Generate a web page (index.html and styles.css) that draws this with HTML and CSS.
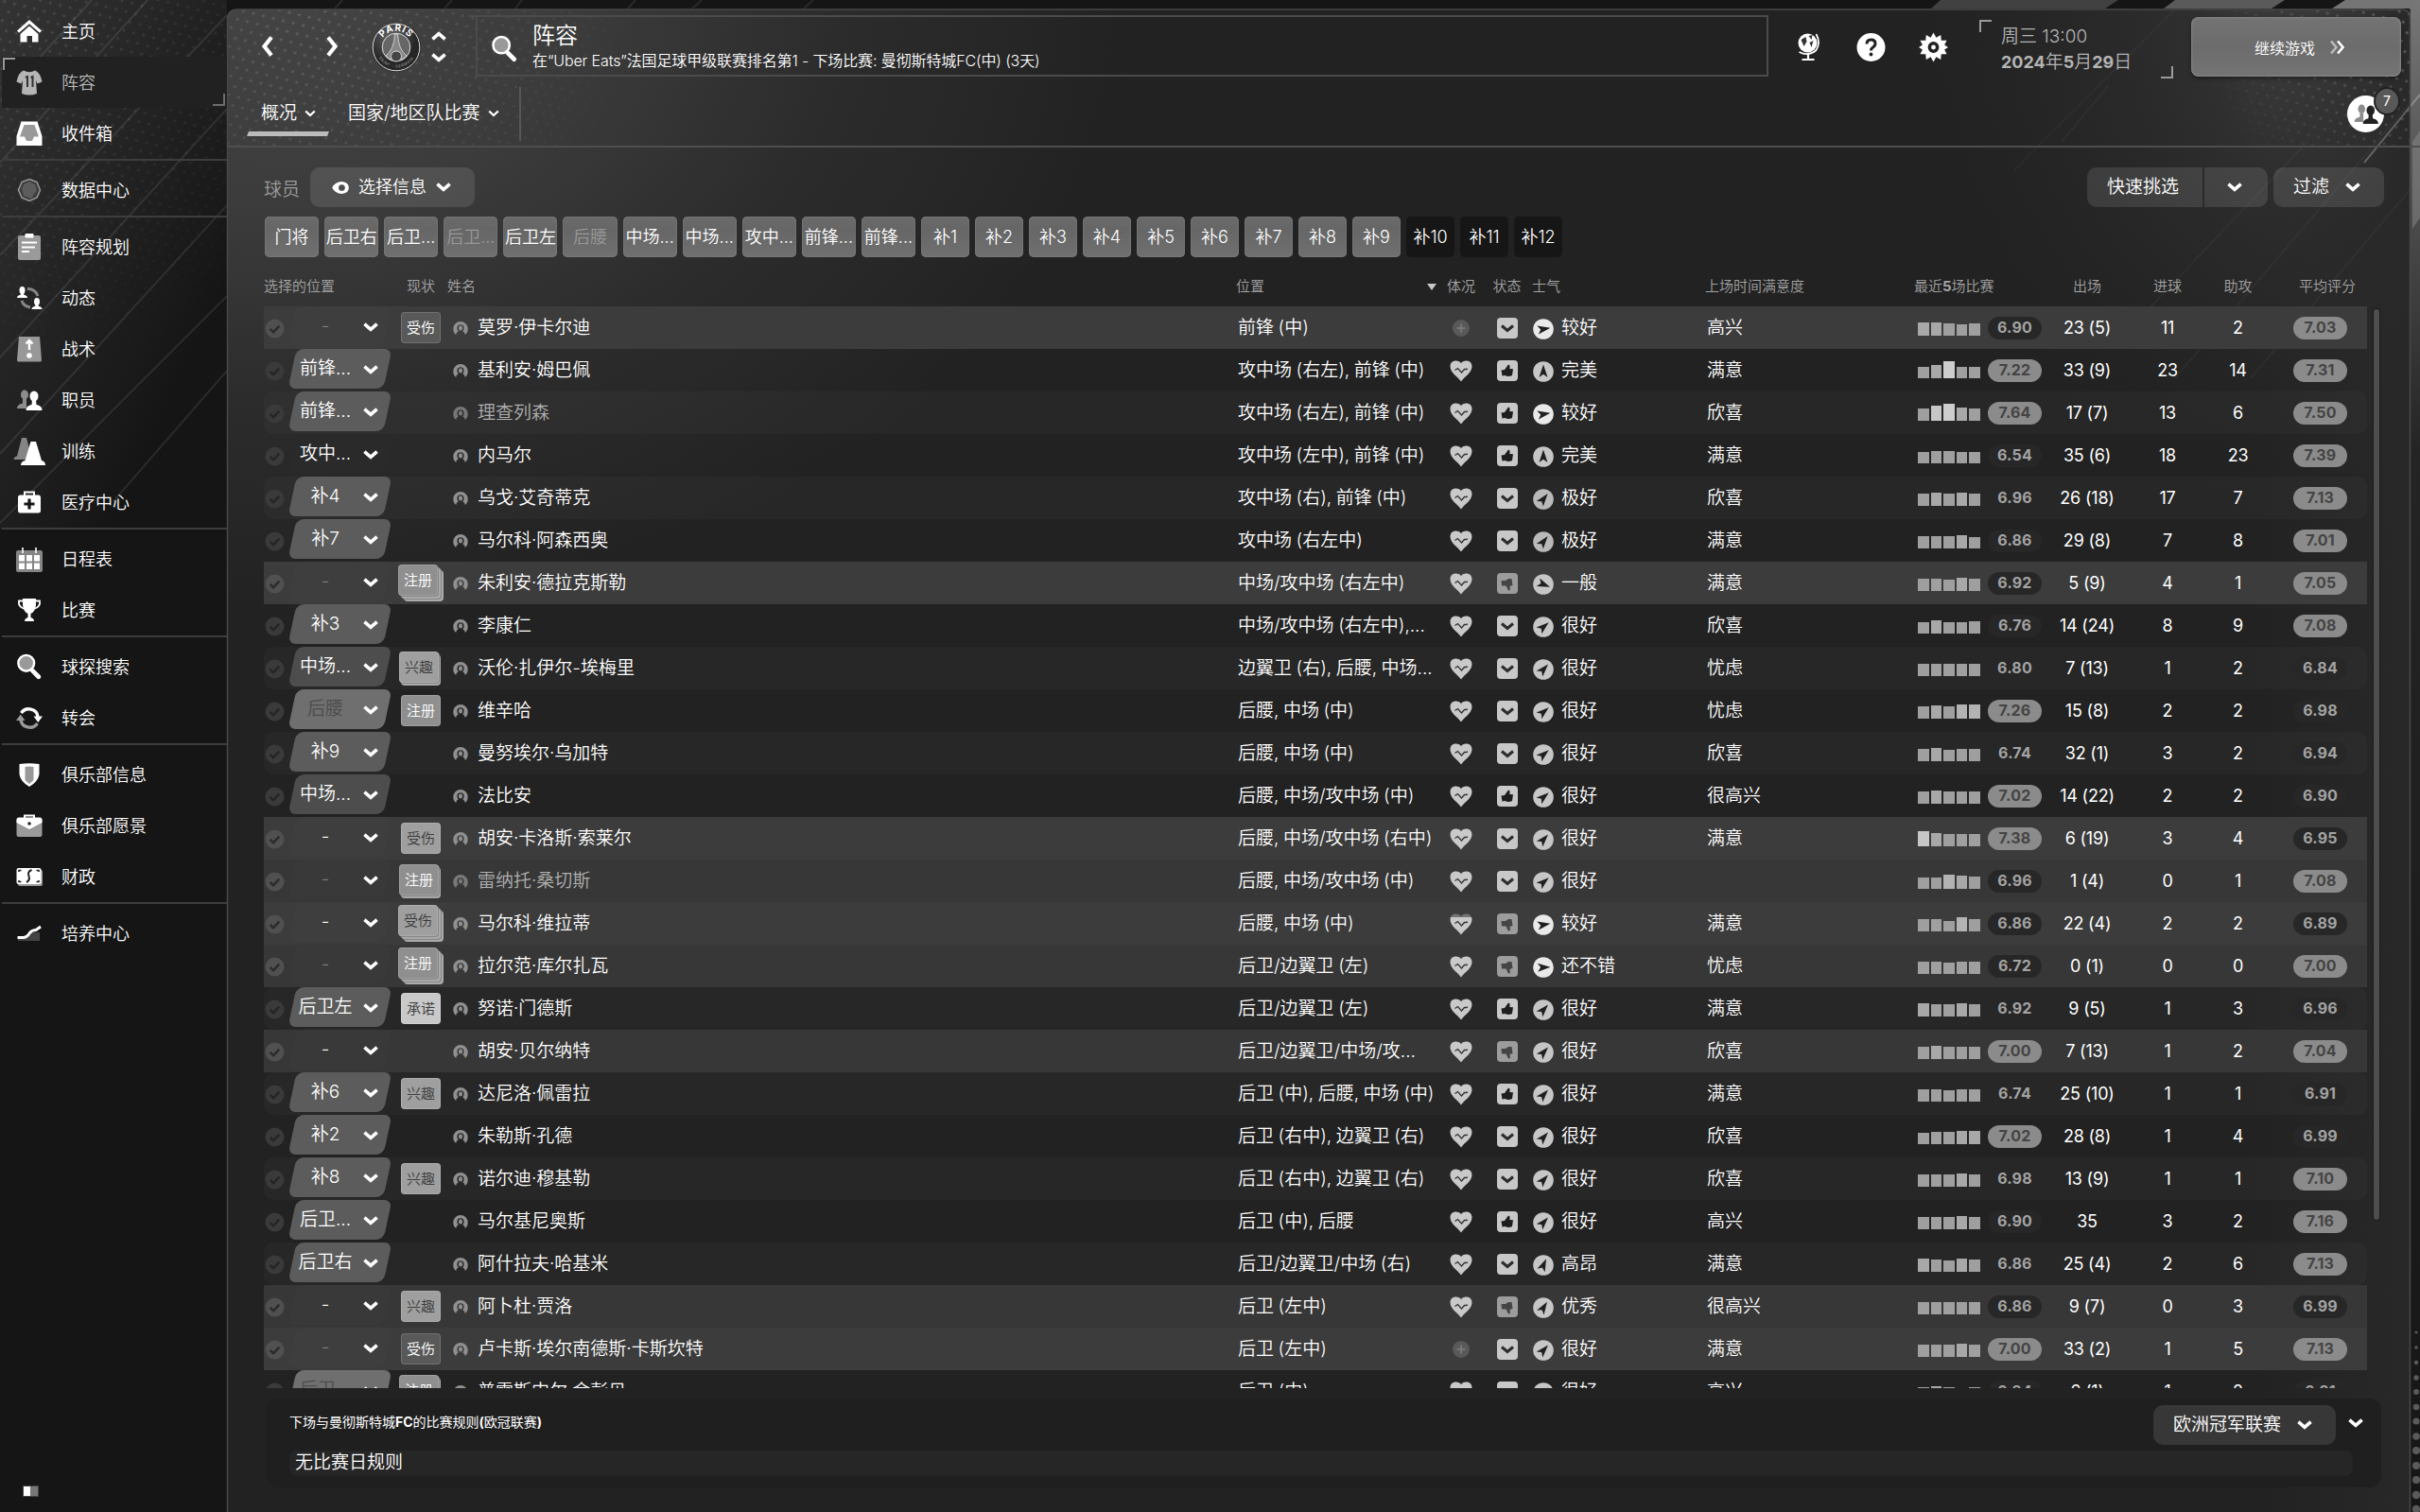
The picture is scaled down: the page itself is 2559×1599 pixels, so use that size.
FILE: index.html
```html
<!DOCTYPE html>
<html lang="zh-CN">
<head>
<meta charset="utf-8">
<title>阵容</title>
<link rel="stylesheet" href="styles.css">
</head>
<body>
<svg class="defs" width="0" height="0" aria-hidden="true">
  <symbol id="chev" viewBox="0 0 16 10"><path d="M1.400 1.600 L8 7.400 L14.600 1.600" fill="none" stroke="currentColor" stroke-width="3.500"/></symbol>
  <symbol id="chev-thin" viewBox="0 0 12 8"><path d="M1.200 1.500 L6 6 L10.800 1.500" fill="none" stroke="currentColor" stroke-width="2.300"/></symbol>
  <symbol id="lens" viewBox="0 0 28 30"><circle cx="10.5" cy="11" r="9" fill="#999" stroke="#fff" stroke-width="2.6"/><path d="M17.5 19.5 L24.5 26.5" stroke="#fff" stroke-width="5" stroke-linecap="round"/></symbol>
  <symbol id="check" viewBox="0 0 22 22"><circle cx="11" cy="11" r="10.5" fill="currentColor"/><path d="M6 11.5 L9.5 15 L16 8" fill="none" stroke="#1f1f1f" stroke-opacity=".75" stroke-width="2.6"/></symbol>
  <symbol id="person" viewBox="0 0 16 15"><path d="M3.200 14 Q.3 12 .3 7.800 A7.700 7.700 0 0 1 15.700 7.800 Q15.700 12 12.800 14 Q12.800 11.500 10.200 10.300 Q11.900 8.800 11.600 6.200 Q11.100 3.300 8 3.300 Q4.900 3.300 4.400 6.200 Q4.100 8.800 5.800 10.300 Q3.200 11.500 3.200 14Z" fill="#909090"/><ellipse cx="8" cy="6.900" rx="2.100" ry="2.600" fill="#909090"/></symbol>
  <symbol id="heart" viewBox="0 0 24 23"><path d="M12 22.500 C8 17 .5 13 .5 6.500 C.5 2.500 3.200 .5 6.500 .5 C9 .5 11.200 1.500 12 3.200 C12.800 1.500 15 .5 17.500 .5 C20.800 .5 23.500 2.500 23.500 6.500 C23.500 13 16 17 12 22.500Z" fill="#c9c9c9"/><path d="M5.500 10.500 L8.500 8.500 L12.500 13 L15.500 9.500 L17.500 9.500 L19 8.800" fill="none" stroke="#333" stroke-width="1.300"/></symbol>
  <symbol id="plus" viewBox="0 0 18 18"><circle cx="9" cy="9" r="9" fill="#595959"/><path d="M9 4.500V13.500M4.500 9H13.500" stroke="#777" stroke-width="2"/></symbol>
  <symbol id="st-c" viewBox="0 0 22 22"><rect width="22" height="22" rx="4" fill="currentColor"/><path d="M5 8.500 L11 13.500 L17 8.500" fill="none" stroke="#2c2c2c" stroke-width="3"/></symbol>
  <symbol id="st-u" viewBox="0 0 22 22"><rect width="22" height="22" rx="4" fill="currentColor"/><path d="M4.500 10.500 L8 10 L12 4.500 Q14.500 5 13.200 9 L17 9.300 L16 16 Q12 18 8.500 16 L5.500 16.500Z" fill="#1e1e1e"/></symbol>
  <symbol id="st-d" viewBox="0 0 22 22"><rect width="22" height="22" rx="4" fill="currentColor"/><path d="M4.500 8 L9 8 L12 6 L15.500 6 L16.500 13 L13.500 14 L14 18 L12 18.500 L9.500 13.500 L5 13.500Z" fill="#454545"/></symbol>
  <symbol id="arrow" viewBox="0 0 22 22"><circle cx="11" cy="11" r="10.800" fill="currentColor"/></symbol>
  <symbol id="people" viewBox="0 0 28 22"><ellipse cx="9" cy="5.500" rx="4" ry="5" fill="#8d8d8d"/><path d="M1 20 Q1 15.500 7 14.500 L7 10 H11 L11 20Z" fill="#8d8d8d"/><ellipse cx="19" cy="7" rx="4.500" ry="5.500" fill="currentColor"/><path d="M10.500 22 Q10.500 17 16.500 16 L17 11 H21 L21.500 16 Q27.500 17 27.500 22Z" fill="currentColor"/></symbol>
</svg>

<svg class="backdrop" viewBox="0 0 2559 1599" aria-hidden="true">
  <defs>
    <linearGradient id="sideGlow" x1="0" y1="0" x2="0.9" y2="1"><stop offset="0" stop-color="#343434"/><stop offset=".35" stop-color="#262626"/><stop offset=".8" stop-color="#151515"/></linearGradient>
    <radialGradient id="panelGlow" gradientUnits="userSpaceOnUse" cx="300" cy="0" r="900" gradientTransform="matrix(1 0 0 .72 0 0)"><stop offset="0" stop-color="#444"/><stop offset=".35" stop-color="#3b3b3b"/><stop offset=".65" stop-color="#2c2c2c"/><stop offset="1" stop-color="#222"/></radialGradient>
    <radialGradient id="panelGlowR" gradientUnits="userSpaceOnUse" cx="2560" cy="0" r="600"><stop offset="0" stop-color="#666"/><stop offset=".4" stop-color="#333"/><stop offset="1" stop-color="#222" stop-opacity="0"/></radialGradient>
    <linearGradient id="rightStrip" x1="0" y1="0" x2="0" y2="1"><stop offset="0" stop-color="#777"/><stop offset=".15" stop-color="#4a4a4a"/><stop offset=".3" stop-color="#242424"/><stop offset="1" stop-color="#161616"/></linearGradient>
    <linearGradient id="rightPanel" x1="0" y1="0" x2="1" y2="0"><stop offset="0" stop-color="#282828" stop-opacity="0"/><stop offset="1" stop-color="#282828"/></linearGradient>
    <pattern id="dots" width="18" height="12" patternUnits="userSpaceOnUse" patternTransform="rotate(-20)"><circle cx="4" cy="3" r="1.600" fill="#fff"/><circle cx="13" cy="9" r="1.600" fill="#fff"/></pattern>
    <radialGradient id="fadeL" gradientUnits="userSpaceOnUse" cx="330" cy="10" r="360"><stop offset="0" stop-color="#fff"/><stop offset="1" stop-color="#000"/></radialGradient>
    <radialGradient id="fadeR" gradientUnits="userSpaceOnUse" cx="2559" cy="30" r="230"><stop offset="0" stop-color="#fff"/><stop offset="1" stop-color="#000"/></radialGradient>
    <radialGradient id="fadeS" gradientUnits="userSpaceOnUse" cx="0" cy="0" r="420"><stop offset="0" stop-color="#fff"/><stop offset="1" stop-color="#000"/></radialGradient>
    <mask id="mL"><rect x="241" y="10" width="500" height="144" fill="url(#fadeL)"/></mask>
    <mask id="mR"><rect x="2300" y="10" width="249" height="144" fill="url(#fadeR)"/></mask>
    <mask id="mS"><rect width="240" height="560" fill="url(#fadeS)"/></mask>
  </defs>
  <rect width="2559" height="1599" fill="#151515"/>
  <rect width="240" height="560" fill="url(#sideGlow)"/>
  <rect width="240" height="560" fill="url(#dots)" opacity=".13" mask="url(#mS)"/>
  <g stroke="#fff" stroke-opacity=".09" stroke-width="2">
    <path d="M97 0L0 107M156 0L0 172M240 16L0 270M240 115L0 378M240 217L0 480M240 313L0 553M240 392L120 530M362 0L354 9M478 0L470 9M552 0L545 9M672 0L664 9M742 0L732 9M860 0L850 9"/>
  </g>
  <path d="M2052 0H2240L2226 9H2042Z" fill="#414141"/>
  <path d="M2300 0H2416L2402 9H2288Z" fill="#5a5a5a"/>
  <path d="M2480 0H2559V9H2466Z" fill="#757575"/>
  <rect x="2548" width="11" height="1599" fill="url(#rightStrip)"/>
  <path d="M2551 150L2559 138V230L2551 242Z" fill="#8a8a8a" opacity=".5"/>
  <g fill="#5a5a5a"><circle cx="2555" cy="1409" r="1.500"/><circle cx="2555" cy="1425" r="1.800"/><circle cx="2555" cy="1441" r="2.200"/><circle cx="2555" cy="1457" r="2.700"/><circle cx="2555" cy="1472" r="3"/><circle cx="2555" cy="1488" r="3.300"/><circle cx="2555" cy="1503" r="3.600"/><circle cx="2555" cy="1519" r="3.800"/><circle cx="2555" cy="1534" r="4"/><circle cx="2555" cy="1550" r="4"/><circle cx="2555" cy="1565" r="4"/><circle cx="2555" cy="1581" r="4.200"/><circle cx="2555" cy="1596" r="4.200"/></g>
  <path d="M240 1599V21Q240 10 251 10H2539Q2549 10 2549 20V1599Z" fill="#222"/>
  <path d="M240 1599V21Q240 10 251 10H2539Q2549 10 2549 20V1599Z" fill="url(#panelGlow)"/>
  <path d="M1900 10H2539Q2549 10 2549 20V700H1900Z" fill="url(#panelGlowR)" opacity=".75"/>
  <rect x="2380" y="10" width="169" height="1589" fill="url(#rightPanel)"/>
  <rect x="241" y="10" width="500" height="144" fill="url(#dots)" opacity=".16" mask="url(#mL)"/>
  <rect x="2300" y="10" width="249" height="144" fill="url(#dots)" opacity=".26" mask="url(#mR)"/>
  <path d="M2549 108L2300 400M2300 10L2130 180M2230 90L2180 150M2440 150L2250 350M2549 200L2380 400" stroke="#fff" stroke-opacity=".035" stroke-width="2"/>
  <path d="M2559 100L2500 172" stroke="#fff" stroke-opacity=".25" stroke-width="2"/>
  <path d="M240.500 1599V21Q240.500 10 251 10H2539Q2548.500 10 2548.500 20V1599" fill="none" stroke="#484848" stroke-width="1.500"/>
</svg>

<div class="app">
<nav class="side">
  <a class="item"><svg viewBox="0 0 28 28"><path d="M1 13.500L14 2L27 13.500L25 15.800L14 6.200L3 15.800Z" fill="#fff"/><path d="M4.500 17L14 8.500L23.500 17V25.500H17V19H11.500V25.500H4.500Z" fill="#fff"/></svg>主页</a>
  <a class="item active"><svg viewBox="0 0 28 28"><path d="M8 1.500Q14 5 20 1.500Q25.500 3.500 27.500 13.500L22.500 15.500L21 12L22 26Q14 29 6 26L7 12L5.500 15.500L.5 13.500Q2.500 3.500 8 1.500Z" fill="#b5b5b5"/><path d="M10 9L12 8V19M15.500 9L17.500 8V19" fill="none" stroke="#333" stroke-width="2"/></svg>阵容<i class="corner tl"></i><i class="corner br"></i></a>
  <a class="item"><svg viewBox="0 0 28 28"><path d="M5.500 1.500H22.500L27.500 17V27H.5V17Z" fill="#fff"/><path d="M8.500 5H19.500L24 17.500H19L17 22H11L9 17.500H4Z" fill="#999"/></svg>收件箱</a>
  <hr>
  <a class="item"><svg viewBox="0 0 28 28"><path d="M14 2.500L22 5.500L25.500 14L22 22L14 25.500L6 22L2.500 14L6 5.500Z" fill="#3c3c3c" stroke="#999" stroke-width="1.500"/><path d="M14 5L20 8L22 14L16 23L8 20L6 13L8 8Z" fill="#5c5c5c"/></svg>数据中心</a>
  <hr>
  <a class="item"><svg viewBox="0 0 28 28"><rect x="2" y="2" width="24" height="26" rx="2" fill="#9a9a9a"/><rect x="9.500" y="0" width="9" height="4.500" rx="1" fill="#fff"/><path d="M6 9.500H22M6 14.500H20M6 19H14" stroke="#fff" stroke-width="1.800"/></svg>阵容规划</a>
  <a class="item"><svg viewBox="0 0 28 28"><g fill="#fff"><ellipse cx="6.500" cy="6" rx="3" ry="4"/><path d="M1 14Q1 11.500 4.800 10.800V8H8.200V10.800Q12 11.500 12 14Z"/><ellipse cx="22" cy="18" rx="3" ry="4"/><path d="M16.500 26Q16.500 23.500 20.300 22.800V20H23.700V22.800Q27.500 23.500 27.500 26Z"/></g><path d="M12 4.500Q20 4 23 12M15 24Q8 23 6 17" fill="none" stroke="#858585" stroke-width="3"/></svg>动态</a>
  <a class="item"><svg viewBox="0 0 28 28"><path d="M3 1H25L27 26Q27 27.500 25 27.500H3Q1 27.500 1 26Z" fill="#989898"/><path d="M14 5V15M10.500 8.500L14 5L17.500 8.500" fill="none" stroke="#fff" stroke-width="2.400"/><circle cx="14" cy="21" r="2.800" fill="#fff"/></svg>战术</a>
  <a class="item"><svg viewBox="0 0 28 28"><use href="#people" y="3" width="28" height="22"/></svg>职员</a>
  <a class="item"><svg viewBox="0 0 28 28"><path d="M6 0H11L17 23H-2.500Q-2 19.500 1 19.500Z" fill="#858585"/><path d="M15.500 4H21L27 24Q31 25 31 29H5Q5 25 9.500 24Z" fill="#fff"/></svg>训练</a>
  <a class="item"><svg viewBox="0 0 28 28"><path d="M9 7V3.500H19V7" fill="none" stroke="#fff" stroke-width="2"/><rect x="2" y="6.500" width="24" height="19" rx="2.500" fill="#fff"/><path d="M14 10.500V21.500M8.500 16H19.500" stroke="#151515" stroke-width="3.200"/></svg>医疗中心</a>
  <hr>
  <a class="item"><svg viewBox="0 0 28 28"><rect x="0" y="5" width="28" height="23" rx="2" fill="#858585"/><path d="M7 2V8M21 2V8" stroke="#fff" stroke-width="1.600"/><path d="M3 10H9V16.500H3ZM11 10H17V16.500H11ZM19 10H25V16.500H19ZM3 18.500H9V25H3ZM11 18.500H17V25H11ZM19 18.500H25V25H19Z" fill="#fff"/></svg>日程表</a>
  <a class="item"><svg viewBox="0 0 28 28"><path d="M7 2H21V9Q20 16 15.500 18V22Q19 23 19 26H9Q9 23 12.500 22V18Q8 16 7 9Z" fill="#fff"/><path d="M7 4.500H3Q2 11 9 13M21 4.500H25Q26 11 19 13" fill="none" stroke="#fff" stroke-width="1.800"/></svg>比赛</a>
  <hr>
  <a class="item"><svg viewBox="0 0 28 30"><use href="#lens" width="28" height="30"/></svg>球探搜索</a>
  <a class="item"><svg viewBox="0 0 28 28"><path d="M5.500 9A9.500 9 0 0 1 23 13" fill="none" stroke="#fff" stroke-width="3.400"/><path d="M18.500 12.500H28L23.300 19Z" fill="#fff"/><path d="M22.500 20A9.500 9 0 0 1 5 16" fill="none" stroke="#999" stroke-width="3.400"/><path d="M0 17H9.500L4.700 10.500Z" fill="#999"/></svg>转会</a>
  <hr>
  <a class="item"><svg viewBox="0 0 28 28"><path d="M3.500 3Q14 1.500 24.500 3V14Q23 22 14 27Q5 22 3.500 14Z" fill="#fff"/><path d="M9.500 6Q14 5 18.500 6V20L14 24L9.500 20Z" fill="#999"/></svg>俱乐部信息</a>
  <a class="item"><svg viewBox="0 0 28 28"><path d="M9 6V3.500H19V6" fill="none" stroke="#fff" stroke-width="2"/><rect x=".5" y="6" width="27" height="20" rx="2.500" fill="#999"/><path d="M.5 8Q.5 5.500 3 5.500H25Q27.500 5.500 27.500 8V11L14 18L.5 11Z" fill="#fff"/><circle cx="14" cy="12" r="1.800" fill="#222"/></svg>俱乐部愿景</a>
  <a class="item"><svg viewBox="0 0 28 28"><rect x="2" y="7" width="26" height="17" rx="2" fill="#999"/><rect x=".5" y="5" width="26" height="17" rx="2" fill="#fff"/><path d="M3 9V7.500H5.500M21.500 7.500H24V9M3 18V19.500H5.500M21.500 19.500H24V18" stroke="#222" fill="none" stroke-width="1.600"/><path d="M16.500 7Q11.500 9 13.500 13.500Q15 18 11 20" stroke="#222" fill="none" stroke-width="2"/></svg>财政</a>
  <hr>
  <a class="item"><svg viewBox="0 0 28 28"><path d="M2 19.500H9Q14 19 16.500 13H25V22H2Z" fill="#444"/><path d="M1.500 18.500H8Q12 18 14.500 13.500Q17 10.500 21 10.500L26 7" fill="none" stroke="#fff" stroke-width="3"/></svg>培养中心</a>
  <i class="battery"></i>
</nav>

<main class="main">
  <header class="top">
    <div class="nav-arrows">
      <svg viewBox="0 0 14 22"><path d="M11 1.500L3.500 11L11 20.500" fill="none" stroke="#fff" stroke-width="4.200"/></svg>
      <svg viewBox="0 0 14 22"><path d="M3 1.500L10.500 11L3 20.500" fill="none" stroke="#fff" stroke-width="4.200"/></svg>
    </div>
    <svg class="crest" viewBox="0 0 54 54">
      <defs><path id="arcTop" d="M9.800 27A17.200 17.200 0 0 1 44.200 27"/><path id="arcBot" d="M5.500 27A21.500 21.500 0 0 0 48.500 27"/><radialGradient id="cg" cx=".4" cy=".3"><stop offset="0" stop-color="#666"/><stop offset="1" stop-color="#262626"/></radialGradient></defs>
      <circle cx="27" cy="27" r="26" fill="url(#cg)"/><circle cx="27" cy="27" r="24.800" fill="none" stroke="#ddd" stroke-width="1"/><circle cx="27" cy="27" r="14.800" fill="#666" stroke="#ddd" stroke-width="1"/>
      <path d="M25.500 13H28.500Q29.500 30 38 36L33 40Q27 32 21 40L16 36Q24.500 30 25.500 13Z" fill="#888" stroke="#ddd" stroke-width=".8"/><circle cx="27" cy="36.500" r="5.500" fill="#444" stroke="#ddd" stroke-width=".9"/>
      <text class="crest-name"><textPath href="#arcTop" startOffset="50%" text-anchor="middle">PARIS</textPath></text>
      <text class="crest-sub"><textPath href="#arcBot" startOffset="50%" text-anchor="middle">SAINT - GERMAIN</textPath></text>
    </svg>
    <div class="updown"><svg class="flip"><use href="#chev"/></svg><svg><use href="#chev"/></svg></div>
    <div class="search">
      <svg class="lens"><use href="#lens"/></svg>
      <div><h1>阵容</h1><p>在“Uber Eats”法国足球甲级联赛排名第1 - 下场比赛: 曼彻斯特城FC(中) (3天)</p></div>
    </div>
    <div class="tools">
      <svg viewBox="0 0 30 32"><circle cx="14" cy="11.500" r="10" fill="#fff"/><path d="M7 8L12 5L13 10L10 15ZM15 4L19 3L18 8ZM16 11L20 9L18 16Z" fill="#333"/><path d="M23 2Q28 11 23 19Q15 26 5 21" fill="none" stroke="#fff" stroke-width="1.800"/><path d="M14.500 23V28M8 29H21" stroke="#fff" stroke-width="2.200"/></svg>
      <svg viewBox="0 0 30 32"><circle cx="15" cy="16" r="15" fill="#fff"/><path d="M10.500 12.500Q10.500 8 15 8Q19.500 8 19.500 12Q19.500 14.500 17 16Q15 17.200 15 19.500" fill="none" stroke="#222" stroke-width="3"/><circle cx="15" cy="23.500" r="1.900" fill="#222"/></svg>
      <svg viewBox="0 0 32 32"><path d="M16 0L19 5.500L24 2.500L24.500 8.500L30.500 8.500L28 13.500L32 16L28 18.500L30.500 23.500L24.500 23.500L24 29.500L19 26.500L16 32L13 26.500L8 29.500L7.500 23.500L1.500 23.500L4 18.500L0 16L4 13.500L1.500 8.500L7.500 8.500L8 2.500L13 5.500Z" fill="#fff"/><circle cx="16" cy="16" r="4.300" fill="#fff" stroke="#222" stroke-width="3.600"/></svg>
    </div>
    <div class="date"><i class="corner tl"></i><span>周三 13:00</span><span class="day"><b>2024</b>年<b>5</b>月<b>29</b>日</span><i class="corner br"></i></div>
    <button class="continue">继续游戏<svg viewBox="0 0 18 16"><path d="M2 1.500L7.500 8L2 14.500" fill="none" stroke="#bbb" stroke-width="2.600"/><path d="M9 1.500L14.500 8L9 14.500" fill="none" stroke="#fff" stroke-width="2.600"/></svg></button>
  </header>

  <div class="tabs">
    <a class="tab on">概况<svg><use href="#chev-thin"/></svg></a>
    <a class="tab">国家/地区队比赛<svg><use href="#chev-thin"/></svg></a>
    <span class="rule"></span>
    <div class="friends"><svg viewBox="0 0 28 22"><use href="#people"/></svg><b>7</b></div>
  </div>

  <section class="content">
    <div class="controls">
      <span class="label">球员</span>
      <button class="btn info"><svg class="eye" viewBox="0 0 20 14"><path d="M0 7Q3.500 0 11 0Q19 1 19 7Q19 13 11 14Q3.500 14 0 7Z" fill="#fff"/><circle cx="11" cy="7" r="3.600" fill="#4d4d4d"/></svg>选择信息<svg class="cv"><use href="#chev"/></svg></button>
      <div class="right">
        <span class="split"><button class="btn quick">快速挑选</button><button class="btn more"><svg class="cv"><use href="#chev"/></svg></button></span>
        <button class="btn filter">过滤<svg class="cv"><use href="#chev"/></svg></button>
      </div>
    </div>
    <div class="chips">
      <span>门将</span><span>后卫右</span><span>后卫...</span><span class="dim">后卫...</span><span>后卫左</span><span class="dim">后腰</span><span>中场...</span><span>中场...</span><span>攻中...</span><span>前锋...</span><span>前锋...</span><span class="s">补1</span><span class="s">补2</span><span class="s">补3</span><span class="s">补4</span><span class="s">补5</span><span class="s">补6</span><span class="s">补7</span><span class="s">补8</span><span class="s">补9</span><span class="s off">补10</span><span class="s off">补11</span><span class="s off">补12</span>
    </div>
    <div class="row head">
      <span class="h-sel">选择的位置</span><span class="h-st">现状</span><span class="h-name">姓名</span><span class="h-pos">位置<i></i></span><span class="c">体况</span><span class="c">状态</span><span class="h-mor">士气</span><span class="h-sat">上场时间满意度</span><span class="h-last">最近<b>5</b>场比赛</span><span class="c">出场</span><span class="c">进球</span><span class="c">助攻</span><span class="h-avg">平均评分</span>
    </div>
    <div class="list-wrap">
      <div class="list" id="list"></div>
      <i class="scroll"></i>
    </div>
    <footer class="rules">
      <div class="rules-top"><span class="rules-title">下场与曼彻斯特城<b>FC</b>的比赛规则<b>(</b>欧冠联赛<b>)</b></span><button class="btn comp">欧洲冠军联赛<svg class="cv"><use href="#chev"/></svg></button><svg class="cv"><use href="#chev"/></svg></div>
      <p>无比赛日规则</p>
    </footer>
  </section>
</main>
</div>
<script src="app.js"></script>
</body>
</html>
```
FILE: styles.css
```css
* { box-sizing: border-box; margin: 0; padding: 0; }
body { width: 2559px; height: 1599px; overflow: hidden; position: relative; background: #151515; color: #fff; font: 350 19px/24px "Inter", "Noto Sans CJK SC", sans-serif; }
.defs { position: absolute; }
.backdrop { position: absolute; inset: 0; width: 2559px; height: 1599px; }
button { font: inherit; color: inherit; border: 0; background: none; display: flex; align-items: center; }
i { display: block; }
.app { position: relative; display: grid; grid-template-columns: 240px 1fr; height: 1599px; }

.side { padding-top: 6px; font-size: 18px; display: flex; flex-direction: column; height: 1599px; }
.item { position: relative; display: flex; align-items: center; height: 54px; padding: 2px 0 0 17px; gap: 20px; flex: none; }
.item > svg { width: 28px; height: 28px; overflow: visible; margin-top: -2px; }
.item.active { background: #212121; color: #bbb; margin-left: 2px; padding-left: 15px; }
.side hr { border: 0; height: 2px; background: #3d3d3d; margin: 0 0 4px 2px; flex: none; }
.corner { position: absolute; width: 13px; height: 13px; border: 2px solid #9a9a9a; }
.corner.tl { top: 1px; left: 1px; border-right: 0; border-bottom: 0; }
.corner.br { right: 2px; bottom: 2px; border-left: 0; border-top: 0; }
.active .corner.br { border-color: #6c6c6c; }
.battery { margin: auto 0 16px 24px; width: 17px; height: 12px; background: linear-gradient(90deg, #fff 45%, #777 45%); border: 1px solid #444; }

.main { display: flex; flex-direction: column; }
.top { display: flex; height: 81px; padding-top: 17px; }
.nav-arrows { display: flex; gap: 54px; padding: 21px 0 0 36px; width: 153px; }
.nav-arrows svg { width: 14px; height: 22px; flex: none; }
.crest { width: 54px; height: 54px; margin: 6px 1px 0 -1px; flex: none; }
.crest-name { font: 700 10px "Inter", sans-serif; fill: #fff; letter-spacing: .8px; }
.crest-sub { font: 400 4px "Inter", sans-serif; fill: #aaa; letter-spacing: .6px; }
.updown { width: 56px; padding: 16px 0 0 9px; display: flex; flex-direction: column; gap: 13px; }
.updown svg { width: 16px; height: 10px; flex: none; }
.flip { transform: scaleY(-1); }
.search { position: relative; width: 1367px; height: 65px; margin-top: -1px; border: 2px solid #4b4b4b; display: flex; flex: none; }
.search::before { content: ""; position: absolute; left: -10px; top: -2px; width: 10px; height: 2px; background: #4b4b4b; }
.search .lens { width: 27px; height: 29px; margin: 19px 16px 0 15px; flex: none; }
.search h1 { font-size: 24px; font-weight: 350; line-height: 30px; margin-top: 5px; }
.search p { font-size: 16px; line-height: 22px; white-space: nowrap; letter-spacing: -.12px; }
.tools { display: flex; padding: 17px 0 0 27px; width: 222px; gap: 35px; flex: none; }
.tools svg { width: 31px; height: 32px; flex: none; }
.date { position: relative; margin-left: 1px; width: 205px; height: 62px; margin-top: 4px; padding: 4px 0 0 23px; display: flex; flex-direction: column; color: #b4b4b4; line-height: 27px; flex: none; }
.day { font-size: 19px; }
.day b { font-weight: 700; font-size: 18px; }
.date .corner.br { bottom: 0; right: 0; }
.date .corner.tl { top: 0; left: 0; }
.continue { margin: 1px 0 0 19px; width: 222px; height: 63px; border-radius: 8px; background: linear-gradient(#737373, #6c6c6c 50%, #747474); box-shadow: 0 2px 4px #0006, inset 0 0 3px #999; font-size: 16px; padding: 2px 0 0 67px; gap: 15px; flex: none; }
.continue svg { width: 18px; height: 16px; margin-top: -2px; }

.tabs { display: flex; height: 75px; border-bottom: 2px solid #4e4e4e; position: relative; }
.tab { display: flex; align-items: center; height: 63px; padding-top: 14px; gap: 8px; position: relative; }
.tab:first-child { margin-left: 21px; width: 86px; padding-left: 15px; }
.tab:first-child::after { content: ""; position: absolute; left: 1px; right: 0; bottom: 0; height: 5px; background: #bbb; transform: skewX(-20deg); }
.tab + .tab { margin-left: 21px; }
.tab svg { width: 12px; height: 8px; }
.rule { width: 2px; height: 57px; margin: 11px 0 0 21px; background: #575757; }
.friends { position: relative; margin: 20px 38px 0 auto; width: 39px; height: 39px; border-radius: 50%; background: #fff; color: #222; display: flex; align-items: center; justify-content: center; }
.friends svg { width: 28px; height: 21px; }
.friends b { position: absolute; left: 28px; top: -9px; width: 28px; height: 30px; border-radius: 50%; background: #585858; border: 2px solid #222; color: #fff; font: 400 14px/26px "Inter", sans-serif; text-align: center; }

.content { display: flex; flex-direction: column; padding-left: 39px; }
.controls { display: flex; height: 42px; margin-top: 21px; }
.label { color: #9c9c9c; padding-top: 12px; width: 49px; }
.btn { background: #ffffff1c; border-radius: 10px; height: 42px; }
.cv { width: 16px; height: 10px; }
.info { width: 174px; padding-left: 23px; font-size: 18px; gap: 9px; }
.eye { width: 19px; height: 13px; }
.info .cv { margin-left: 1px; }
.right { margin-left: auto; margin-right: 38px; display: flex; gap: 6px; }
.split { display: flex; gap: 2px; }
.quick { width: 122px; padding-left: 21px; border-radius: 10px 0 0 10px; }
.more { width: 67px; padding-left: 24px; border-radius: 0 10px 10px 0; }
.filter { width: 117px; padding-left: 21px; gap: 17px; }
.chips { display: flex; gap: 6px; margin: 10px 0 0 1px; font-size: 18px; }
.chips span { width: 57.100px; height: 43px; border-radius: 5px; background: linear-gradient(#6b6b6b, #666 30%, #707070); box-shadow: inset 0 0 2px #8a8a8a; display: flex; align-items: center; justify-content: center; white-space: nowrap; }
.chips .s { width: 51px; }
.chips .dim { color: #999; }
.chips .off { background: #161616; box-shadow: none; }

.row { display: grid; width: 2224px; grid-template-columns: 27px 108px 61px 25px 803px 220px 44px 53px 179px 229px 70px 65px 88px 82px 67px 103px; align-items: center; height: 45px; white-space: nowrap; flex: none; }
.row > * { min-width: 0; }
.head { height: 52px; font-size: 15px; color: #a3a3a3; padding-top: 10px; }
.h-sel { grid-column: 1 / 3; }
.h-st { padding-left: 16px; }
.h-name { grid-column: 4 / 6; margin-left: -2px; }
.h-pos { padding-left: 4px; display: flex; align-items: center; }
.h-pos i { margin: 0 4px 0 auto; border: 5.500px solid transparent; border-top: 7px solid #c8c8c8; border-bottom: 0; }
.h-sat { padding-left: 4px; }
.h-last { grid-column: span 2; margin-left: -4px; }
.h-avg { padding-left: 31px; }
.c { text-align: center; justify-self: center; }

.list-wrap { display: flex; height: 1144px; overflow: hidden; }
.list { height: 1144px; overflow: hidden; }
.scroll { width: 6px; height: 963px; border-radius: 3px; background: #4e4e4e; margin: 3px 0 0 7px; box-shadow: 0 0 0 1px #1a1a1a; }
.even { background: #ffffff06; border-radius: 10px; }
.out { background: #373737; border-radius: 0; }
.out.even { background: #3c3c3c; }
.tick { width: 21px; height: 21px; color: #3a3a3a; margin: 1px 0 0 1px; }
.out .tick { color: #505050; }
.pos { position: relative; height: 42px; align-self: start; display: flex; align-items: center; justify-content: space-between; padding: 0 14px 1px 0; }
.pos::before { content: ""; position: absolute; inset: 0 4px 0 3px; border-radius: 8px; background: #5c5c5c; transform: skewX(-12deg); }
.pos.mid::before { background: #4d4d4d; }
.pos.low::before { background: #2a2a2a; }
.pos.hi::before { background: #6f6f6f; }
.pos.none::before { background: #ffffff03; }
.pos.hi { color: #4c4c4c; }
.pos span { position: relative; width: 76px; text-align: center; }
.pos .grey { color: #808080; }
.pos svg { position: relative; color: #fff; margin-top: 3px; }
.badge { position: relative; width: 42px; height: 33px; border-radius: 4px; background: #9f9f9f; color: #3c3c3c; font-size: 15px; line-height: 34px; text-align: center; margin-left: 10px; align-self: start; margin-top: 6px; box-shadow: inset 0 0 0 1px #ffffff26; }
.badge.reg { background: #8f8f8f; color: #fff; }
.badge.inj { background: #595959; color: #fff; }
.badge.pro { background: #c9c9c9; }
.badge.two { margin: 5px 0 0 8px; box-shadow: inset 0 0 0 1px #ffffff26, 1px 1px 0 #858585, 2px 3px 0 #aaa; }
.badge.three { margin: 3px 0 0 7px; box-shadow: inset 0 0 0 1px #ffffff26, 1px 1px 0 #858585, 3px 3px 0 #aaa, 4px 4px 0 #858585, 6px 6px 0 #aaa; }
.person { width: 16px; height: 15px; margin: 1px 0 0 4px; }
.grey-row .person { opacity: .75; }
.name { padding-left: 5px; }
.name.grey { color: #b0b0b0; }
.where { padding-left: 6px; word-spacing: -.8px; }
.heart { width: 24px; height: 23px; margin-top: 1px; justify-self: center; }
.plus { width: 18px; height: 18px; margin-top: 1px; justify-self: center; }
.tired { position: relative; justify-self: center; display: flex; }
.tired::after { content: ""; position: absolute; left: 0; right: 0; top: 1px; height: 4px; background: #3c3c3c99; }
.state { width: 22px; height: 22px; color: #c8c8c8; justify-self: center; margin-top: 1px; }
.state.bad { color: #9c9c9c; }
.morale { display: flex; align-items: center; gap: 8px; padding-left: 1px; }
.morale svg { width: 22px; height: 22px; color: #c6c6c6; margin-top: 2px; }
.morale svg.lit { color: #e9e9e9; }
.morale svg.soft { color: #b9b9b9; }
.sat { padding-left: 6px; }
.bars { display: flex; gap: 2px; align-items: flex-end; width: 66px; height: 20px; align-self: start; margin-top: 11px; }
.bars i { flex: 1; background: #9f9f9f; }
.bars .b14 { background: #a8a8a8; }
.bars .b15 { background: #b3b3b3; }
.bars .b16 { background: #c6c6c6; }
.bars .b18 { background: #cdcdcd; }
.pill { width: 57px; height: 24px; border-radius: 12px; background: #272727; color: #a3a3a3; font-size: 16px; font-weight: 700; line-height: 23px; text-align: center; justify-self: center; margin-top: 1px; letter-spacing: .2px; }
.pill.good { background: #8b8b8b; color: #444; }
.pill.avg { margin-left: 4px; }
.num { font-size: 18px; font-weight: 400; letter-spacing: -.2px; }

.rules { width: 2236px; height: 94px; margin: 11px 0 0 3px; border-radius: 12px; background: #1f1f1f; padding: 7px 19px 0 24px; }
.rules-top { display: flex; align-items: center; height: 42px; }
.rules-title { font-size: 14px; font-weight: 400; padding-bottom: 6px; }
.comp { width: 193px; margin-left: auto; padding-left: 21px; gap: 17px; margin-right: 13px; }
.comp + .cv { margin-bottom: 5px; }
.rules p { margin-top: 6px; height: 27px; line-height: 26px; padding-left: 6px; width: 2182px; background: #262626; border-radius: 8px; }
```
FILE: app.js
```js
// [position, position tone, status, name, roles, heart, state, morale, angle, satisfaction, bars, last5, apps, goals, assists, rating, flags]
const players = [
  ['-', 'none grey', '受伤 inj', '莫罗·伊卡尔迪', '前锋 (中)', 'plus', 'c', '较好', 80, '高兴', [14,14,13,12,13], '6.90', '23 (5)', 11, 2, '7.03', 'out'],
  ['前锋...', '', '', '基利安·姆巴佩', '攻中场 (右左), 前锋 (中)', '', 'u', '完美', 0, '满意', [12,14,18,12,12], '7.22', '33 (9)', 23, 14, '7.31', ''],
  ['前锋...', '', '', '理查列森', '攻中场 (右左), 前锋 (中)', '', 'u', '较好', 80, '欣喜', [13,16,18,14,13], '7.64', '17 (7)', 13, 6, '7.50', 'grey'],
  ['攻中...', 'low', '', '内马尔', '攻中场 (左中), 前锋 (中)', '', 'u', '完美', 0, '满意', [12,13,13,12,12], '6.54', '35 (6)', 18, 23, '7.39', ''],
  ['补4', '', '', '乌戈·艾奇蒂克', '攻中场 (右), 前锋 (中)', '', 'c', '极好', 38, '欣喜', [13,14,13,14,13], '6.96', '26 (18)', 17, 7, '7.13', ''],
  ['补7', '', '', '马尔科·阿森西奥', '攻中场 (右左中)', '', 'c', '极好', 38, '满意', [13,13,13,14,12], '6.86', '29 (8)', 7, 8, '7.01', ''],
  ['-', 'none grey', '注册 reg three', '朱利安·德拉克斯勒', '中场/攻中场 (右左中)', '', 'd', '一般', 112, '满意', [13,13,12,14,13], '6.92', '5 (9)', 4, 1, '7.05', 'out'],
  ['补3', '', '', '李康仁', '中场/攻中场 (右左中),...', '', 'c', '很好', 50, '欣喜', [12,14,12,12,13], '6.76', '14 (24)', 8, 9, '7.08', ''],
  ['中场...', 'mid', '兴趣 int two', '沃伦·扎伊尔-埃梅里', '边翼卫 (右), 后腰, 中场...', '', 'c', '很好', 42, '忧虑', [13,13,13,13,13], '6.80', '7 (13)', 1, 2, '6.84', ''],
  ['后腰', 'hi', '注册 reg', '维辛哈', '后腰, 中场 (中)', '', 'c', '很好', 50, '忧虑', [13,14,13,15,15], '7.26', '15 (8)', 2, 2, '6.98', ''],
  ['补9', '', '', '曼努埃尔·乌加特', '后腰, 中场 (中)', '', 'c', '很好', 50, '欣喜', [13,14,12,13,13], '6.74', '32 (1)', 3, 2, '6.94', ''],
  ['中场...', 'mid', '', '法比安', '后腰, 中场/攻中场 (中)', '', 'u', '很好', 50, '很高兴', [13,14,13,13,13], '7.02', '14 (22)', 2, 2, '6.90', ''],
  ['-', 'none', '受伤 int', '胡安·卡洛斯·索莱尔', '后腰, 中场/攻中场 (右中)', '', 'c', '很好', 42, '满意', [16,14,13,13,13], '7.38', '6 (19)', 3, 4, '6.95', 'out'],
  ['-', 'none grey', '注册 reg two', '雷纳托·桑切斯', '后腰, 中场/攻中场 (中)', '', 'c', '很好', 50, '', [12,12,15,14,13], '6.96', '1 (4)', 0, 1, '7.08', 'out grey'],
  ['-', 'none', '受伤 int three', '马尔科·维拉蒂', '后腰, 中场 (中)', 'tired', 'd', '较好', 80, '满意', [13,13,11,15,13], '6.86', '22 (4)', 2, 2, '6.89', 'out'],
  ['-', 'none grey', '注册 reg three', '拉尔范·库尔扎瓦', '后卫/边翼卫 (左)', '', 'd', '还不错', 88, '忧虑', [13,13,12,13,13], '6.72', '0 (1)', 0, 0, '7.00', 'out'],
  ['后卫左', '', '承诺 pro', '努诺·门德斯', '后卫/边翼卫 (左)', '', 'u', '很好', 42, '满意', [14,13,13,14,13], '6.92', '9 (5)', 1, 3, '6.96', ''],
  ['-', 'none', '', '胡安·贝尔纳特', '后卫/边翼卫/中场/攻...', '', 'd', '很好', 42, '欣喜', [13,14,13,13,13], '7.00', '7 (13)', 1, 2, '7.04', 'out'],
  ['补6', '', '兴趣 int', '达尼洛·佩雷拉', '后卫 (中), 后腰, 中场 (中)', '', 'u', '很好', 42, '满意', [13,13,12,13,13], '6.74', '25 (10)', 1, 1, '6.91', ''],
  ['补2', '', '', '朱勒斯·孔德', '后卫 (右中), 边翼卫 (右)', '', 'c', '很好', 42, '欣喜', [12,13,13,14,14], '7.02', '28 (8)', 1, 4, '6.99', ''],
  ['补8', '', '兴趣 int', '诺尔迪·穆基勒', '后卫 (右中), 边翼卫 (右)', '', 'c', '很好', 42, '欣喜', [13,13,13,14,13], '6.98', '13 (9)', 1, 1, '7.10', ''],
  ['后卫...', '', '', '马尔基尼奥斯', '后卫 (中), 后腰', '', 'u', '很好', 42, '高兴', [13,13,13,14,13], '6.90', '35', 3, 2, '7.16', ''],
  ['后卫右', '', '', '阿什拉夫·哈基米', '后卫/边翼卫/中场 (右)', '', 'c', '高昂', 24, '满意', [14,13,12,14,13], '6.86', '25 (4)', 2, 6, '7.13', ''],
  ['-', 'none', '兴趣 int', '阿卜杜·贾洛', '后卫 (左中)', '', 'd', '优秀', 32, '很高兴', [13,13,13,13,13], '6.86', '9 (7)', 0, 3, '6.99', 'out'],
  ['-', 'none grey', '受伤 inj', '卢卡斯·埃尔南德斯·卡斯坎特', '后卫 (左中)', 'plus', 'c', '很好', 42, '满意', [13,13,13,14,13], '7.00', '33 (2)', 1, 5, '7.13', 'out'],
  ['后卫...', 'hi', '注册 reg two', '普雷斯内尔·金彭贝', '后卫 (中)', '', 'c', '很好', 42, '高兴', [13,14,13,11,13], '6.84', '6 (1)', 1, 2, '6.81', ''],
];

const use = (id, cls) => `<svg class="${cls}"><use href="#${id}"/></svg>`;
const pill = (v, extra) => `<span class="pill ${extra} ${v >= '7' ? 'good' : ''}">${v}</span>`;

document.getElementById('list').innerHTML = players.map((p, i) => {
  const [pos, tone, status, name, roles, heart, state, morale, angle, sat, bars, last5, apps, goals, assists, rating, flags] = p;
  const [label, ...kind] = status.split(' ');
  const badge = label ? `<span class="badge ${kind.join(' ')}">${label}</span>` : '<span></span>';
  const fit = heart === 'plus' ? use('plus', 'plus')
    : heart === 'tired' ? `<span class="tired">${use('heart', 'heart')}</span>` : use('heart', 'heart');
  const lit = angle > 70 && angle < 100 ? 'lit' : morale === '极好' ? 'soft' : '';
  const grey = flags.includes('grey');
  return `<div class="row ${i % 2 ? '' : 'even'} ${flags.includes('out') ? 'out' : ''} ${grey ? 'grey-row' : ''}">
    ${use('check', 'tick')}
    <div class="pos ${tone.replace('grey', '')}"><span class="${tone.includes('grey') ? 'grey' : ''}">${pos}</span>${use('chev', 'cv')}</div>
    ${badge}
    ${use('person', 'person')}
    <span class="name ${grey ? 'grey' : ''}">${name}</span>
    <span class="where">${roles}</span>
    ${fit}
    ${use('st-' + state, 'state ' + (state === 'd' ? 'bad' : ''))}
    <span class="morale"><svg class="${lit}" viewBox="0 0 22 22"><use href="#arrow"/><path d="M11 3.500L15.500 17L11 13.800L6.500 17Z" fill="#1f1f1f" transform="rotate(${angle} 11 11)"/></svg>${morale}</span>
    <span class="sat">${sat}</span>
    <span class="bars">${bars.map(h => `<i class="b${h}" style="height:${h}px"></i>`).join('')}</span>
    ${pill(last5, '')}
    <span class="num c">${apps}</span><span class="num c">${goals}</span><span class="num c">${assists}</span>
    ${pill(rating, 'avg')}
  </div>`;
}).join('');
```
